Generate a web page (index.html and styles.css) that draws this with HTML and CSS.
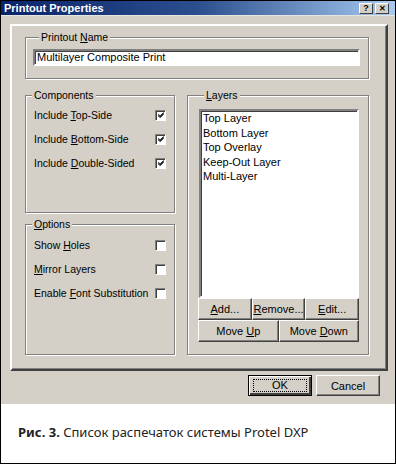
FILE: index.html
```
<!DOCTYPE html>
<html lang="ru">
<head>
    <meta charset="UTF-8">
    <title>Printout Properties</title>
    <link rel="stylesheet" href="styles.css">
</head>
<body>
    <div class="shot">
        <div class="window">
            <div class="titlebar">
                <span class="title">Printout Properties</span>
                <div class="caps">
                    <span class="cap">?</span>
                    <span class="cap cap-close">&#x2715;</span>
                </div>
            </div>
            <div class="dialog">
                <div class="panel">
                    <div class="group name-group">
                        <div class="group-label">Printout <u>N</u>ame</div>
                        <div class="textbox">Multilayer Composite Print</div>
                    </div>
                    <div class="columns">
                        <div class="left-col">
                            <div class="group comp-group">
                                <div class="group-label">Components</div>
                                <div class="check-row"><span>Include <u>T</u>op-Side</span><span class="checkbox checked"><svg width="9" height="9" viewBox="0 0 9 9"><path d="M1.5 4 L3.5 6 L7.5 2 M1.5 5 L3.5 7 L7.5 3 M1.5 3 L3.5 5 L7.5 1" stroke="#000" stroke-width="1" fill="none"/></svg></span></div>
                                <div class="check-row"><span>Include <u>B</u>ottom-Side</span><span class="checkbox checked"><svg width="9" height="9" viewBox="0 0 9 9"><path d="M1.5 4 L3.5 6 L7.5 2 M1.5 5 L3.5 7 L7.5 3 M1.5 3 L3.5 5 L7.5 1" stroke="#000" stroke-width="1" fill="none"/></svg></span></div>
                                <div class="check-row"><span>Include <u>D</u>ouble-Sided</span><span class="checkbox checked"><svg width="9" height="9" viewBox="0 0 9 9"><path d="M1.5 4 L3.5 6 L7.5 2 M1.5 5 L3.5 7 L7.5 3 M1.5 3 L3.5 5 L7.5 1" stroke="#000" stroke-width="1" fill="none"/></svg></span></div>
                            </div>
                            <div class="group opt-group">
                                <div class="group-label"><u>O</u>ptions</div>
                                <div class="check-row"><span>Show <u>H</u>oles</span><span class="checkbox"></span></div>
                                <div class="check-row"><span><u>M</u>irror Layers</span><span class="checkbox"></span></div>
                                <div class="check-row"><span>Enable <u>F</u>ont Substitution</span><span class="checkbox"></span></div>
                            </div>
                        </div>
                        <div class="group layers-group">
                            <div class="group-label"><u>L</u>ayers</div>
                            <div class="listbox">
                                <div>Top Layer</div>
                                <div>Bottom Layer</div>
                                <div>Top Overlay</div>
                                <div>Keep-Out Layer</div>
                                <div>Multi-Layer</div>
                            </div>
                            <div class="btn-row three">
                                <span class="btn"><span><u>A</u>dd...</span></span>
                                <span class="btn"><span><u>R</u>emove...</span></span>
                                <span class="btn"><span><u>E</u>dit...</span></span>
                            </div>
                            <div class="btn-row two">
                                <span class="btn"><span>Move <u>U</u>p</span></span>
                                <span class="btn"><span>Move <u>D</u>own</span></span>
                            </div>
                        </div>
                    </div>
                </div>
                <div class="footer">
                    <span class="btn btn-default"><span class="focus">OK</span></span>
                    <span class="btn">Cancel</span>
                </div>
            </div>
        </div>
        <div class="caption"><b>Рис. 3.</b> Список распечаток системы Protel DXP</div>
    </div>
</body>
</html>
```

FILE: styles.css
```
* {
    box-sizing: border-box;
}

body {
    margin: 0;
    padding: 0;
    background: #ffffff;
}

.shot {
    width: 396px;
    height: 464px;
    border: 1px solid #000;
    display: flex;
    flex-direction: column;
    font-family: 'Liberation Sans', Arial, sans-serif;
    font-size: 10.5px;
    color: #000;
}

.window {
    background-color: #d4d0c8;
    display: flex;
    flex-direction: column;
}

.titlebar {
    height: 14px;
    background: linear-gradient(to right, #0a246a 0%, #2c4f8e 50%, #a6caf0 100%);
    display: flex;
    align-items: center;
    justify-content: space-between;
    padding: 0 6px 0 3px;
}

.title {
    color: #ffffff;
    font-weight: bold;
    font-size: 11px;
}

.caps {
    display: flex;
    gap: 2px;
}

.cap {
    width: 14px;
    height: 11px;
    background: #d4d0c8;
    border: 1px solid;
    border-color: #fff #404040 #404040 #fff;
    font-size: 9px;
    font-weight: bold;
    line-height: 9px;
    text-align: center;
}

.cap-close {
    font-size: 8px;
}

.dialog {
    padding: 8px 7px 0 9px;
    border-top: 1px solid #e8e6e0;
}

.panel {
    border: 2px solid;
    border-color: #ffffff #404040 #404040 #ffffff;
    box-shadow: inset -1px -1px 0 #808080;
    padding: 11px 17px 14px 13px;
}

.group {
    border: 1px solid #808080;
    box-shadow: inset 1px 1px 0 #ffffff, 1px 1px 0 #ffffff;
}

.group-label {
    width: fit-content;
    margin: -7px 0 0 6px;
    padding: 0 2px;
    background: #d4d0c8;
    line-height: 13px;
}

.name-group {
    height: 42px;
    padding: 0 8px 0 7px;
}

.textbox {
    margin-top: 5px;
    height: 17px;
    background: #ffffff;
    border: 2px solid;
    border-color: #808080 #ffffff #ffffff #808080;
    box-shadow: inset 1px 1px 0 #404040;
    padding-left: 2px;
    line-height: 13px;
    font-size: 11px;
}

.columns {
    margin-top: 16px;
    display: flex;
    gap: 12px;
}

.left-col {
    width: 150px;
    display: flex;
    flex-direction: column;
    gap: 11px;
}

.comp-group {
    height: 118px;
}

.opt-group {
    height: 131px;
}

.check-row {
    height: 24px;
    display: flex;
    align-items: center;
    justify-content: space-between;
    padding: 0 8px 0 8px;
}

.comp-group .group-label + .check-row {
    margin-top: 1px;
}

.opt-group .group-label + .check-row {
    margin-top: 2px;
}

.checkbox {
    width: 11px;
    height: 11px;
    background: #ffffff;
    border: 1px solid;
    border-color: #808080 #ffffff #ffffff #808080;
    box-shadow: inset 1px 1px 0 #404040;
    display: flex;
    align-items: center;
    justify-content: center;
}

.checkbox svg {
    margin: 1px 0 0 1px;
}

.layers-group {
    flex: 1;
    height: 260px;
    padding: 0 9px 0 10px;
}

.listbox {
    margin: 7px 0 0 1px;
    height: 189px;
    background: #ffffff;
    border: 2px solid;
    border-color: #808080 #ffffff #ffffff #808080;
    box-shadow: inset 1px 1px 0 #404040;
    padding: 0 0 0 2px;
    font-size: 11px;
    line-height: 14.5px;
}

.btn-row {
    display: grid;
    height: 22px;
}

.btn-row.three {
    grid-template-columns: 1fr 1fr 1fr;
}

.btn-row.two {
    grid-template-columns: 1fr 1fr;
}

.btn {
    display: flex;
    align-items: center;
    justify-content: center;
    background: #d4d0c8;
    border: 1px solid;
    border-color: #ffffff #404040 #404040 #ffffff;
    box-shadow: inset -1px -1px 0 #808080;
    font-size: 11px;
}

.footer {
    display: flex;
    justify-content: flex-end;
    gap: 4px;
    padding: 4px 8px 8px 0;
}

.footer .btn {
    width: 64px;
    height: 21px;
}

.btn-default {
    border: 1px solid #000;
    box-shadow: inset 1px 1px 0 #ffffff, inset -2px -2px 0 #404040, inset -1px -1px 0 #808080;
}

.focus {
    width: 54px;
    height: 13px;
    border: 1px dotted #000;
    text-align: center;
    line-height: 11px;
}

.caption {
    flex: 1;
    background: #ffffff;
    padding: 19px 0 0 17px;
    font-family: 'Noto Sans', sans-serif;
    font-size: 13px;
    color: #222;
}

.caption b {
    font-weight: bold;
}
```
